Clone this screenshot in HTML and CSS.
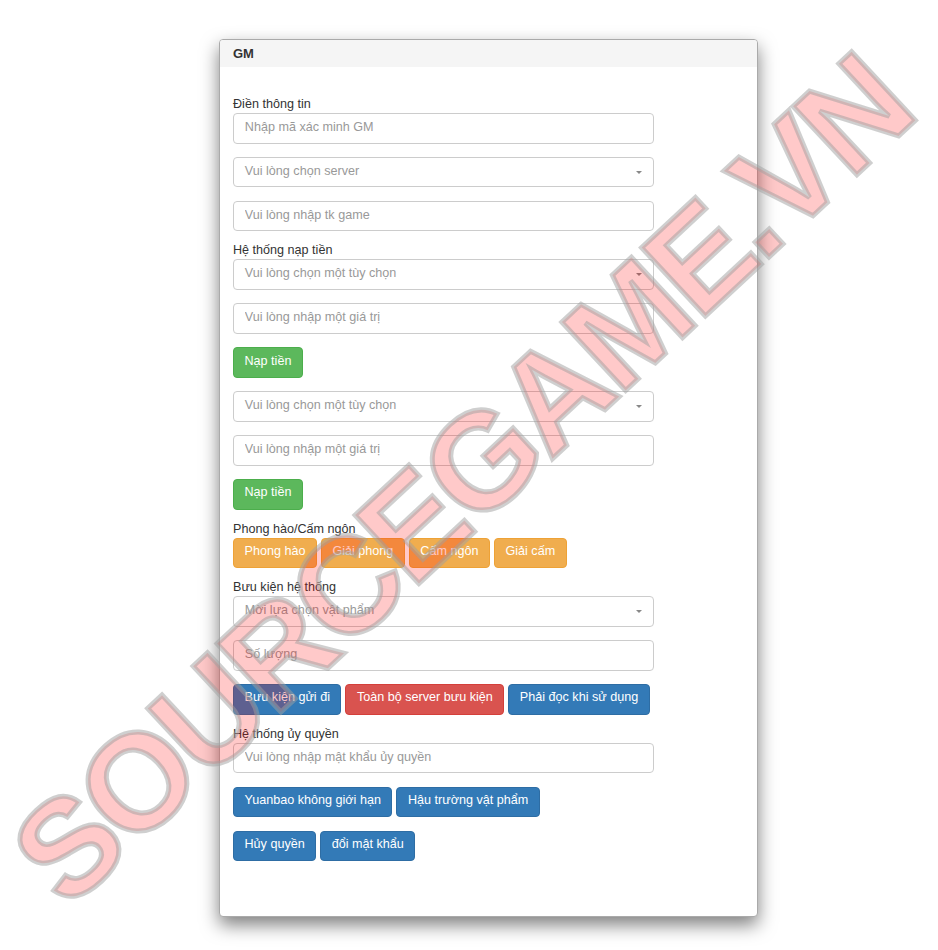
FILE: index.html
```html
<!DOCTYPE html>
<html lang="vi">
<head>
<meta charset="utf-8">
<title>GM</title>
<link rel="stylesheet" href="styles.css">
</head>
<body>
<div class="panel">
  <div class="panel-heading">GM</div>
  <div class="panel-body">
    <form class="form">
      <label class="label">Điền thông tin</label>
      <input class="control" placeholder="Nhập mã xác minh GM">
      <div class="control select"><span>Vui lòng chọn server</span><i class="caret"></i></div>
      <input class="control" placeholder="Vui lòng nhập tk game">
      <label class="label">Hệ thống nạp tiền</label>
      <div class="control select"><span>Vui lòng chọn một tùy chọn</span><i class="caret"></i></div>
      <input class="control" placeholder="Vui lòng nhập một giá trị">
      <div class="actions"><button type="button" class="btn green">Nạp tiền</button></div>
      <div class="control select"><span>Vui lòng chọn một tùy chọn</span><i class="caret"></i></div>
      <input class="control" placeholder="Vui lòng nhập một giá trị">
      <div class="actions"><button type="button" class="btn green">Nạp tiền</button></div>
      <label class="label">Phong hào/Cấm ngôn</label>
      <div class="actions">
        <button type="button" class="btn orange">Phong hào</button>
        <button type="button" class="btn orange">Giải phong</button>
        <button type="button" class="btn orange">Cấm ngôn</button>
        <button type="button" class="btn orange">Giải cấm</button>
      </div>
      <label class="label">Bưu kiện hệ thống</label>
      <div class="control select"><span>Mời lựa chọn vật phẩm</span><i class="caret"></i></div>
      <input class="control" placeholder="Số lượng">
      <div class="actions">
        <button type="button" class="btn blue">Bưu kiện gửi đi</button>
        <button type="button" class="btn red">Toàn bộ server bưu kiện</button>
        <button type="button" class="btn blue">Phải đọc khi sử dụng</button>
      </div>
      <label class="label">Hệ thống ủy quyền</label>
      <input class="control" placeholder="Vui lòng nhập mật khẩu ủy quyền">
      <div class="actions">
        <button type="button" class="btn blue">Yuanbao không giới hạn</button>
        <button type="button" class="btn blue">Hậu trường vật phẩm</button>
      </div>
      <div class="actions">
        <button type="button" class="btn blue">Hủy quyền</button>
        <button type="button" class="btn blue">đổi mật khẩu</button>
      </div>
    </form>
  </div>
</div>
<svg class="watermark" width="938" height="950" viewBox="0 0 938 950" aria-hidden="true">
  <text class="watermark-text" x="0" y="0" transform="translate(460 478) rotate(-43) translate(0 49)" text-anchor="middle">SOURCEGAME.VN</text>
</svg>
</body>
</html>
```
FILE: styles.css
```css
* { box-sizing: border-box; }
html, body { margin: 0; height: 950px; overflow: hidden; background: #fff; }
body {
  padding: 39px 0 0 219px;
  font-family: "Liberation Sans", Arial, sans-serif;
  font-size: 12.6px;
  color: #333;
}
.panel {
  width: 539px;
  height: 878px;
  background: #fff;
  border: 1px solid #aaa;
  border-radius: 4px;
  box-shadow: 0 8px 18px rgba(0, 0, 0, .5);
  overflow: hidden;
}
.panel-heading {
  height: 27px;
  padding: 0 13px;
  background: #f5f5f5;
  font-size: 13px;
  font-weight: bold;
  line-height: 27px;
  color: #333;
}
.panel-body { padding: 28px 13px 0; }
.form { width: 421px; display: flex; flex-direction: column; }
.label { display: block; height: 18px; margin-top: -3.2px; line-height: 18px; color: #333; }
.label:first-child { margin-top: 0; }
.control {
  display: block;
  width: 100%;
  height: 30.6px;
  padding: 0 10.8px 3px;
  margin-bottom: 13.3px;
  border: 1px solid #ccc;
  border-radius: 4px;
  background: #fff;
  font: 12.6px "Liberation Sans", Arial, sans-serif;
  color: #999;
  outline: none;
}
.control::placeholder { color: #999; opacity: 1; }
.select { display: flex; align-items: center; justify-content: space-between; }
.caret {
  width: 0;
  height: 0;
  margin-top: 3px;
  border-left: 3px solid transparent;
  border-right: 3px solid transparent;
  border-top: 3px solid #888;
}
.actions { display: flex; gap: 4px; margin-bottom: 13.3px; }
.btn {
  height: 30.6px;
  padding: 0 10.5px 4px;
  border: 1px solid transparent;
  border-radius: 4px;
  font: 12.6px "Liberation Sans", Arial, sans-serif;
  color: #fff;
  white-space: nowrap;
}
.green { background: #5cb85c; border-color: #4cae4c; }
.orange { background: #f0ad4e; border-color: #eea236; }
.blue { background: #337ab7; border-color: #2e6da4; }
.red { background: #d9534f; border-color: #d43f3a; }
.watermark { position: absolute; left: 0; top: 0; pointer-events: none; }
.watermark-text {
  font-family: "Liberation Sans", Arial, sans-serif;
  font-weight: bold;
  font-size: 136px;
  letter-spacing: -4px;
  fill: rgba(255, 0, 0, .21);
  stroke: rgba(160, 160, 160, .5);
  stroke-width: 5px;
}
```
